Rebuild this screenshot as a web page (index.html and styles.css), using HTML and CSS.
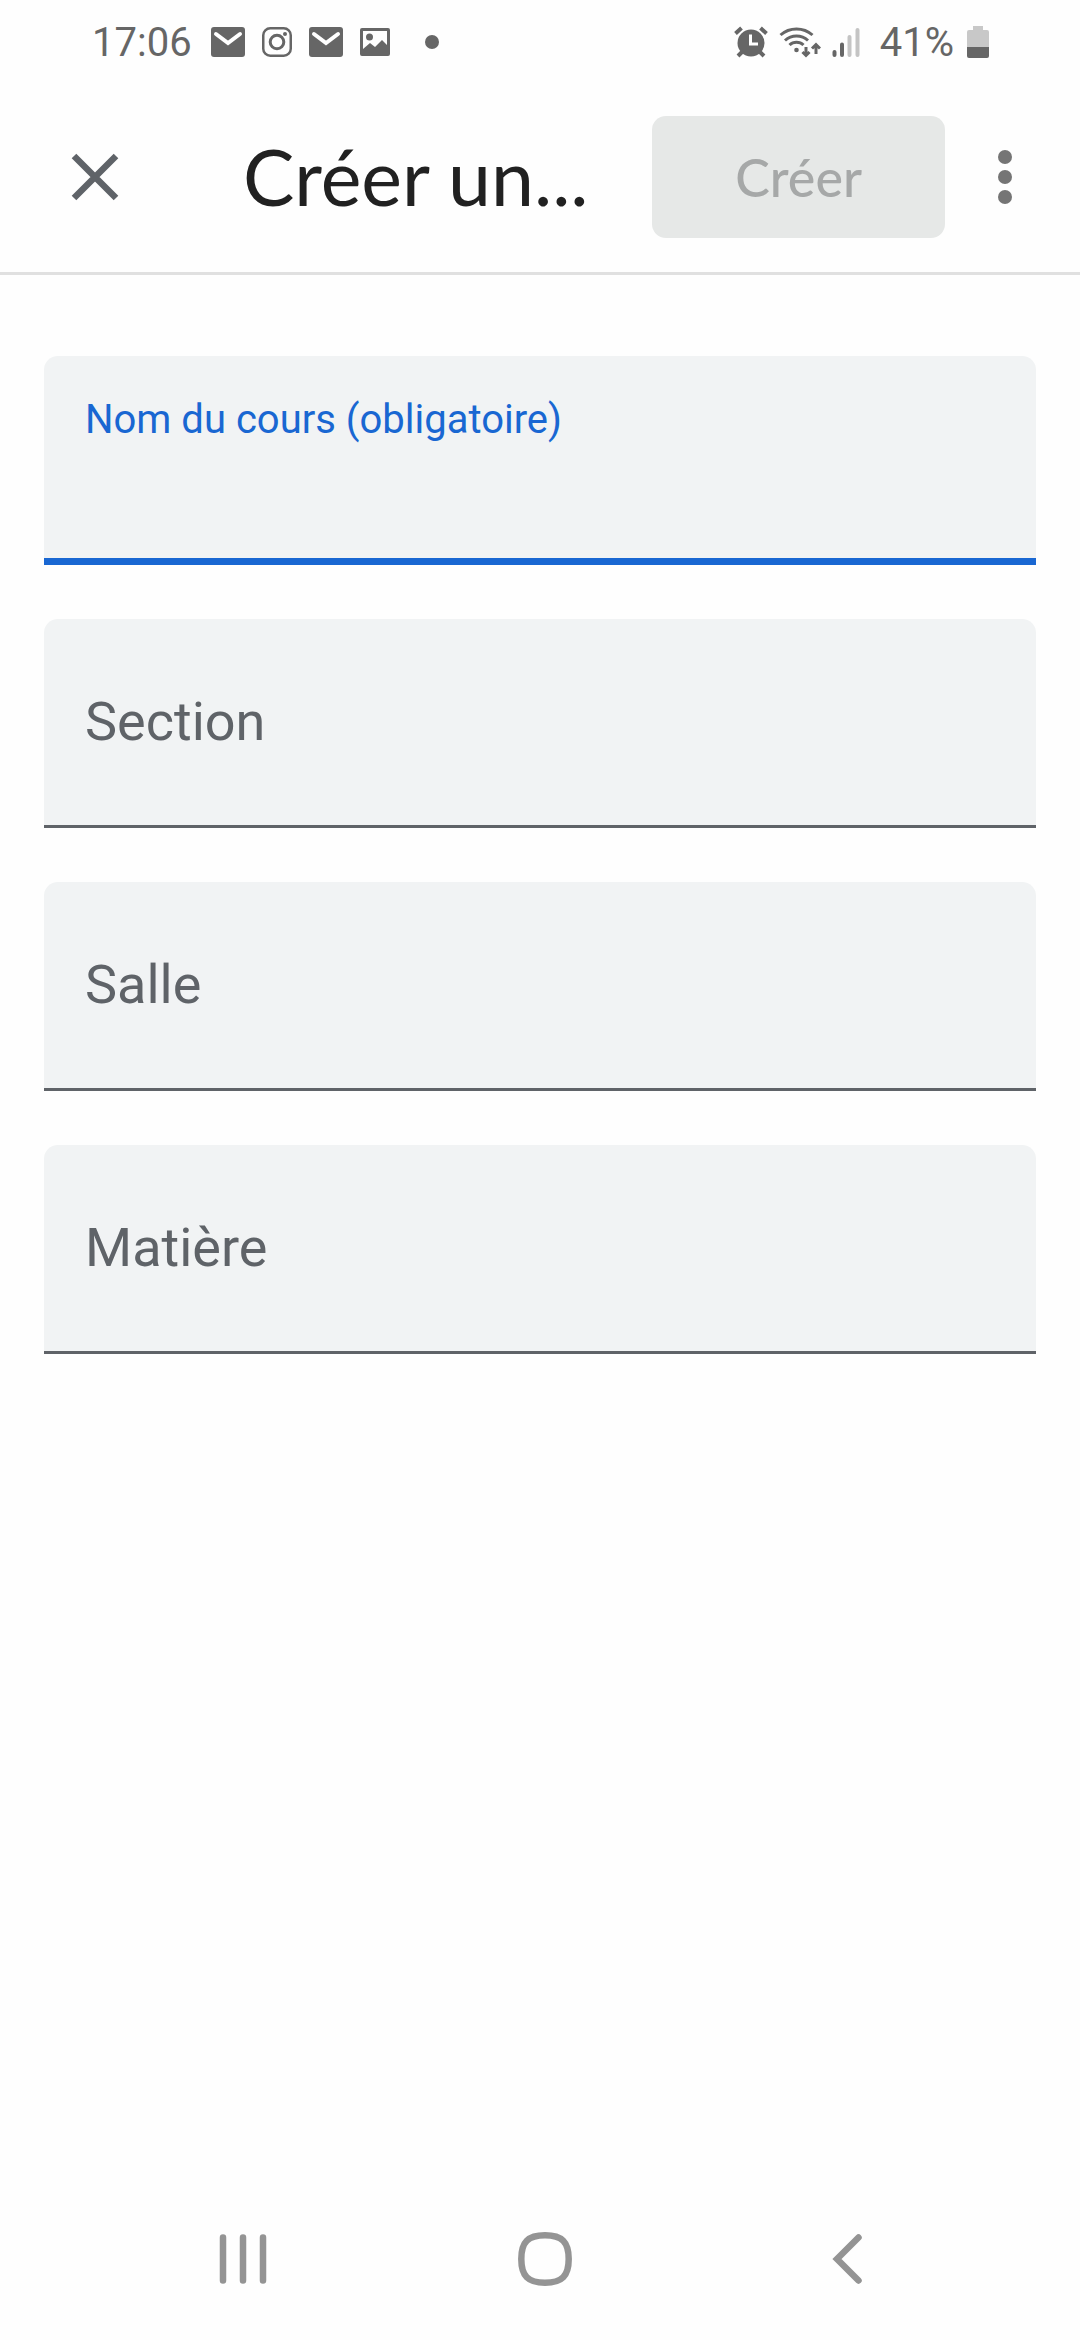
FILE: index.html
```html
<!DOCTYPE html>
<html lang="fr">
<head>
  <meta charset="utf-8">
  <meta name="viewport" content="width=device-width, initial-scale=1">
  <title>Créer un cours</title>
  <link rel="stylesheet" href="styles.css">
</head>
<body>
  <div class="status">
    <div class="status-group notices">
      <span class="clock">17:06</span>
      <svg class="icon" width="34" height="30" viewBox="0 0 34 30"><rect width="34" height="30" rx="3" fill="#666"/><path d="M5 7l12 9 12-9" fill="none" stroke="#fff" stroke-width="4" stroke-linecap="round"/></svg>
      <svg class="icon" width="30" height="30" viewBox="0 0 30 30" fill="none" stroke="#666"><rect x="1.250" y="1.250" width="27.500" height="27.500" rx="7" stroke-width="2.500"/><circle cx="15" cy="15" r="6.800" stroke-width="3"/><circle cx="23" cy="7" r="2" fill="#666" stroke="none"/></svg>
      <svg class="icon" width="34" height="30" viewBox="0 0 34 30"><rect width="34" height="30" rx="3" fill="#666"/><path d="M5 7l12 9 12-9" fill="none" stroke="#fff" stroke-width="4" stroke-linecap="round"/></svg>
      <svg class="icon" width="30" height="28" viewBox="0 0 30 28"><path fill="#666" fill-rule="evenodd" d="M2 0h26a2 2 0 0 1 2 2v24a2 2 0 0 1-2 2H2a2 2 0 0 1-2-2V2a2 2 0 0 1 2-2zm1 3v18l7-6 5 4 7-7 5 5V3z"/><circle cx="9.500" cy="9" r="3.500" fill="#666"/></svg>
      <span class="more-dot"></span>
    </div>
    <div class="status-group system">
      <svg class="icon" width="34" height="32" viewBox="0 0 34 32" fill="none" stroke="#666"><circle cx="17" cy="17" r="13.500" fill="#666" stroke="none"/><path d="M1.500 7.500l6-5.500M32.500 7.500l-6-5.500M4 30l5-5M30 30l-5-5" stroke-width="4"/><path d="M16.500 8.500v9.500H24" stroke="#fff" stroke-width="3"/></svg>
      <svg class="icon" width="42" height="32" viewBox="0 0 42 32" fill="none" stroke="#666" stroke-width="3"><path d="M1.500 9a24 24 0 0 1 32 0M6 14.500a17 17 0 0 1 23 0M10.500 19a10 10 0 0 1 14 0"/><circle cx="17.500" cy="24" r="2.300" fill="#666" stroke="none"/><path d="M27 21v9M23.500 26l3.500 3.500 3.500-3.500M37 28v-9M33 22.500l4-4 4 4"/></svg>
      <svg class="icon" width="28" height="32" viewBox="0 0 28 32" stroke-width="4" stroke-linecap="round"><path d="M2.500 26v3M10 18.500V29" stroke="#666"/><path d="M17.500 11v18M25.500 4v25" stroke="#c4c4c4"/></svg>
      <span class="charge">41%</span>
      <svg class="icon" width="22" height="32" viewBox="0 0 22 32"><path d="M6 0h10v4h4a2 2 0 0 1 2 2v15H0V6a2 2 0 0 1 2-2h4z" fill="#c8c8c8"/><path d="M0 21h22v9a2 2 0 0 1-2 2H2a2 2 0 0 1-2-2z" fill="#666"/></svg>
    </div>
  </div>

  <header class="appbar">
    <button class="icon-button" type="button" aria-label="Fermer">
      <svg width="48" height="48" viewBox="0 0 48 48"><path d="M3 3l42 42M45 3L3 45" stroke="#5f6368" stroke-width="6.500"/></svg>
    </button>
    <h1 class="title">Créer un...</h1>
    <button class="create" type="submit" form="course" disabled>Créer</button>
    <button class="icon-button" type="button" aria-label="Plus d’options">
      <svg width="14" height="56" viewBox="0 0 14 56" fill="#757575"><circle cx="7" cy="8" r="7"/><circle cx="7" cy="28" r="7"/><circle cx="7" cy="48" r="7"/></svg>
    </button>
  </header>

  <form class="form" id="course">
    <div class="field field-active">
      <label for="name">Nom du cours (obligatoire)</label>
      <input id="name" type="text" required>
    </div>
    <div class="field">
      <label for="section">Section</label>
      <input id="section" type="text">
    </div>
    <div class="field">
      <label for="room">Salle</label>
      <input id="room" type="text">
    </div>
    <div class="field">
      <label for="subject">Matière</label>
      <input id="subject" type="text">
    </div>
  </form>

  <nav class="navbar">
    <button class="nav-button" type="button" aria-label="Applications récentes">
      <svg width="48" height="54" viewBox="0 0 48 54" stroke="#949494" stroke-width="6.500" stroke-linecap="round"><path d="M4 5.500v43M24 5.500v43M44 5.500v43"/></svg>
    </button>
    <button class="nav-button" type="button" aria-label="Accueil">
      <svg width="54" height="54" viewBox="0 0 54 54" fill="none" stroke="#949494" stroke-width="6.500"><path d="M27 3.300C44 3.300 50.700 10 50.700 27S44 50.700 27 50.700 3.300 44 3.300 27 10 3.300 27 3.300z"/></svg>
    </button>
    <button class="nav-button" type="button" aria-label="Retour">
      <svg width="30" height="54" viewBox="0 0 30 54" fill="none" stroke="#949494" stroke-width="6.500" stroke-linecap="round"><path d="M26.500 5.500L5 27l21.500 21.500"/></svg>
    </button>
  </nav>
</body>
</html>
```
FILE: styles.css
```css
* {
  box-sizing: border-box;
}

body {
  display: flex;
  flex-direction: column;
  min-height: 100vh;
  margin: 0;
  background: #fefefe;
  font-family: Roboto, sans-serif;
}

button {
  padding: 0;
  border: 0;
  background: none;
}

svg {
  display: block;
}

.status {
  display: flex;
  justify-content: space-between;
  align-items: center;
  height: 84px;
  padding: 0 91px 0 92px;
  color: #666;
  font-size: 40px;
  line-height: 48px;
}

.status-group {
  display: flex;
  align-items: center;
}

.notices {
  gap: 17px;
}

.clock {
  margin-right: 2px;
  padding-top: 2px;
}

.more-dot {
  width: 14px;
  height: 14px;
  margin-left: 18px;
  border-radius: 50%;
  background: #666;
}

.system {
  gap: 11px;
}

.charge {
  margin: 0 2px 0 9px;
  padding-top: 2px;
}

.appbar {
  display: flex;
  align-items: center;
  height: 191px;
  padding: 0 27px 3px 47px;
  border-bottom: 3px solid #e0e0e0;
}

.icon-button {
  display: flex;
  flex: none;
  justify-content: center;
  align-items: center;
  width: 96px;
  height: 96px;
}

.title {
  flex: 1;
  margin: 0 0 0 100px;
  padding-bottom: 2px;
  color: #212121;
  font-family: Lato, sans-serif;
  font-size: 77px;
  font-weight: 400;
  line-height: 96px;
  white-space: nowrap;
}

.create {
  flex: none;
  height: 122px;
  margin-right: 12px;
  padding: 0 83px;
  border-radius: 14px;
  background: #e6e8e7;
  color: #a6a8a8;
  font-family: Lato, sans-serif;
  font-size: 52px;
  font-weight: 500;
}

.form {
  display: grid;
  gap: 54px;
  padding: 81px 44px;
}

.field {
  display: grid;
  height: 209px;
  border-bottom: 3px solid #5f6368;
  border-radius: 14px 14px 0 0;
  background: #f1f3f4;
}

.field label,
.field input {
  grid-area: 1 / 1;
}

.field label {
  align-self: center;
  padding: 0 41px;
  color: #5f6368;
  font-size: 54px;
  line-height: 64px;
}

.field input {
  width: 100%;
  padding: 48px 41px 0;
  border: 0;
  outline: 0;
  background: none;
  color: #212121;
  font: inherit;
  font-size: 54px;
}

.field-active {
  border-bottom: 7px solid #1967d2;
}

.field-active label {
  align-self: start;
  padding-top: 40px;
  color: #1967d2;
  font-size: 40px;
  line-height: 48px;
}

.navbar {
  display: flex;
  height: 162px;
  margin-top: auto;
  padding: 0 82px 0 92px;
}

.nav-button {
  display: flex;
  flex: 1;
  justify-content: center;
  align-items: center;
}
```
